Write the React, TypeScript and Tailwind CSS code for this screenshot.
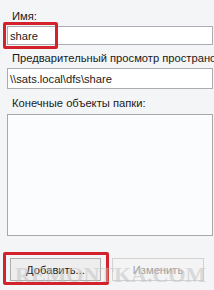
import React from 'react';

function App() {
  return (
    <div className="relative w-[214px] h-[290px] overflow-hidden bg-[#f4f5f7] text-[11.2px] leading-[14px] text-[#1a1a1a] font-['Liberation_Sans',Arial,sans-serif]">
      <div className="flex flex-col pl-[7px] pt-[8px]">
        {/* Name */}
        <div className="pl-[5px] h-[16px] flex items-center">Имя:</div>
        <div className="mt-[2px] h-[19px] w-[206px] border border-[#abadb3] bg-white flex items-center pl-[2px]">
          share
        </div>

        {/* Preview */}
        <div className="mt-[5px] pl-[5px] h-[16px] flex items-center whitespace-nowrap overflow-hidden">
          Предварительный просмотр пространства
        </div>
        <div className="mt-[2px] h-[21px] w-[206px] border border-[#abadb3] bg-white flex items-center pl-[2px] whitespace-nowrap">
          \\sats.local\dfs\share
        </div>

        {/* Targets */}
        <div className="mt-[6px] pl-[5px] h-[16px] flex items-center">Конечные объекты папки:</div>
        <div className="mt-[3px] h-[122px] w-[206px] border border-[#a8a8a8] bg-[#fbfcfd]" />

        {/* Buttons */}
        <div className="mt-[22px] flex gap-[11px] pl-[3px]">
          <button className="w-[91px] h-[23px] border border-[#adadad] bg-[#eeeeee] text-[#1a1a1a]">
            Добавить...
          </button>
          <button className="w-[92px] h-[23px] border border-[#d3d3d3] bg-[#f4f4f4] text-[#a0a0a0]">
            Изменить
          </button>
        </div>
      </div>

      {/* Highlights */}
      <div className="absolute left-[3px] top-[22px] w-[55px] h-[27px] border-[3px] border-[#d4222c] rounded-[2px]" />
      <div className="absolute left-[3px] top-[252px] w-[106px] h-[33px] border-[3px] border-[#d4222c] rounded-[2px]" />

      {/* Watermark */}
      <div className="pointer-events-none absolute left-[15px] top-[263px] text-[22px] leading-[24px] font-bold font-['Liberation_Serif',serif] text-[#c0c0c0] opacity-50 whitespace-nowrap">
        REMONTKA.COM
      </div>
    </div>
  );
}

export default App;
